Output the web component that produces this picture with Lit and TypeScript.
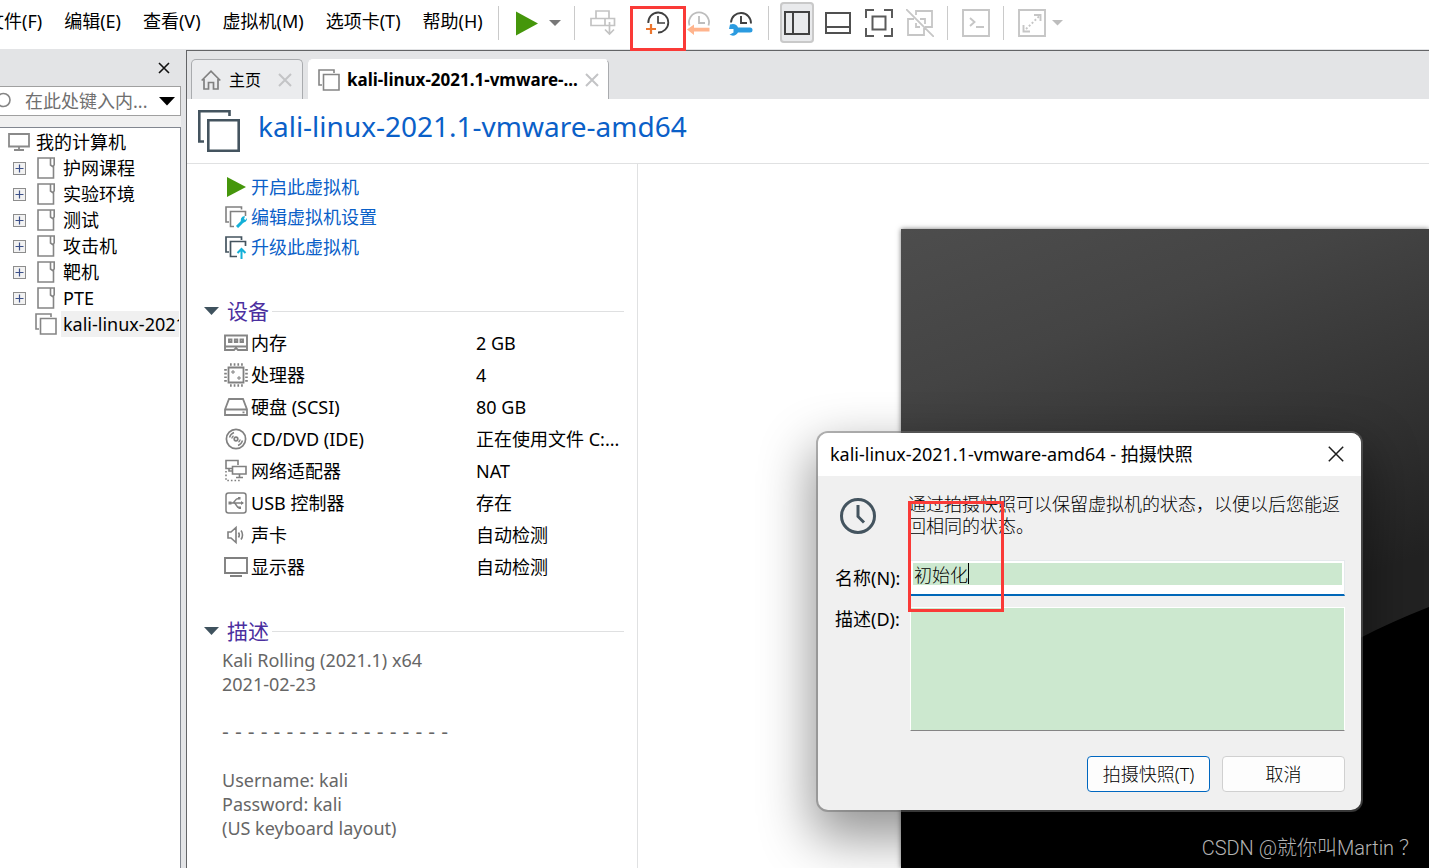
import { LitElement, html, css, nothing, type TemplateResult } from "lit";
import { customElement, property } from "lit/decorators.js";

const icons: Record<string, TemplateResult> = {
  play: html`<svg width="24" height="26" viewBox="0 0 24 26"><path d="M1 1.500v24L23 13.500z" fill="#45960b"/></svg>`,
  caret: html`<svg width="12" height="8" viewBox="0 0 12 8"><path d="M0 1h12L6 7z" fill="#787878"/></svg>`,
  caretOff: html`<svg width="12" height="8" viewBox="0 0 12 8"><path d="M0 1h11L5.500 6.500z" fill="#bdbdbd"/></svg>`,
  sendKeys: html`<svg width="26" height="26" viewBox="0 0 26 26" fill="none" stroke="#c3c3c3" stroke-width="1.700"><path d="M6 8V1h13v7M1 8.500h23.500v7H1zM15 8.500v7M19.500 12v12M15 19.500l4.500 4.500 4.500-4.500"/></svg>`,
  snapTake: html`<svg width="26" height="26" viewBox="0 0 26 26" fill="none"><path d="M4.300 13A10 10 0 1 1 14 22.500" stroke="#404040" stroke-width="1.800"/><path d="M14 6v7h7" stroke="#404040" stroke-width="1.700"/><path d="M7 14v10M2 19h10" stroke="#ec762f" stroke-width="2.200"/></svg>`,
  snapRevert: html`<svg width="26" height="26" viewBox="0 0 26 26" fill="none"><path d="M3.500 15.500a10 10 0 1 1 19 0M13 6v7h6" stroke="#bdbdbd" stroke-width="1.800"/><path d="M1 19.500l7-5v3.200h15.500v3.800H8V25z" fill="#ffb48d"/></svg>`,
  snapManage: html`<svg width="28" height="26" viewBox="0 0 28 26" fill="none"><path d="M4 12.500a10 10 0 1 1 20 1M14 6v7h6" stroke="#404040" stroke-width="1.900"/><path d="M3 14.500c4-1.500 7 0 8 3h12a2.300 2.300 0 0 1 0 5H11c-1.500 3-5 4-8.500 2.300l4-2.300v-3.500H2z" fill="#2b9be0"/></svg>`,
  paneLeft: html`<svg width="26" height="26" viewBox="0 0 26 26" fill="none" stroke="#414141" stroke-width="2"><path d="M1 2h24v22H1zM9 2v22"/></svg>`,
  paneBottom: html`<svg width="26" height="26" viewBox="0 0 26 26" fill="none" stroke="#505050" stroke-width="2"><path d="M1 3h24v20H1zM1 17h24"/></svg>`,
  fit: html`<svg width="28" height="28" viewBox="0 0 28 28" fill="none" stroke="#5a5a5a" stroke-width="2"><path d="M1 9V1h8M19 1h8v8M27 19v8h-8M9 27H1v-8M7.500 7.500h13v13h-13z"/></svg>`,
  noUnity: html`<svg width="28" height="28" viewBox="0 0 28 28" fill="none" stroke="#c6c6c6" stroke-width="1.800"><path d="M10 6V2h16v16h-7M8 10H2v16h16v-7M14 10h5v5M0 0l28 28M10 14v4h4"/></svg>`,
  console: html`<svg width="28" height="28" viewBox="0 0 28 28" fill="none" stroke="#c6c6c6" stroke-width="1.900"><path d="M1 1h26v26H1zM8 9l4.500 4L8 17M14 18h8"/></svg>`,
  stretch: html`<svg width="28" height="28" viewBox="0 0 28 28" fill="none" stroke="#c6c6c6" stroke-width="1.900"><path d="M1 1h26v26H1zM16 6h6.500v6M5.500 16v6.500H12"/><path d="M8 20L21 7.500" stroke-dasharray="2 2"/></svg>`,
  cross: html`<svg width="14" height="14" viewBox="0 0 14 14" stroke="#111" stroke-width="1.600"><path d="M2 2l10 10M12 2L2 12"/></svg>`,
  crossPale: html`<svg width="14" height="14" viewBox="0 0 14 14" stroke="#c3c4c6" stroke-width="2"><path d="M1 1l12 12M13 1L1 13"/></svg>`,
  crossDialog: html`<svg width="16" height="16" viewBox="0 0 16 16" stroke="#1c1c1c" stroke-width="1.500"><path d="M.8.8l14.400 14.400M15.200.8L.8 15.200"/></svg>`,
  search: html`<svg width="12" height="20" viewBox="0 0 12 20" fill="none" stroke="#858585" stroke-width="1.600"><circle cx="3.500" cy="9" r="6.500"/></svg>`,
  dropdown: html`<svg width="16" height="9" viewBox="0 0 16 9"><path d="M0 0h16L8 8.500z" fill="#000"/></svg>`,
  computer: html`<svg width="22" height="20" viewBox="0 0 22 20" fill="none" stroke="#8a8a8a" stroke-width="1.800"><path d="M1 2h20v12.500H1zM11 15v3M6 18h10"/></svg>`,
  plus: html`<svg width="13" height="13" viewBox="0 0 13 13" fill="none"><rect x=".5" y=".5" width="12" height="12" fill="#f2f2f2" stroke="#8d8d8d"/><path d="M6.500 2.500v8M2.500 6.500h8" stroke="#3c5089" stroke-width="1.200"/></svg>`,
  folder: html`<svg width="18" height="22" viewBox="0 0 18 22" fill="none" stroke="#858585" stroke-width="1.600"><path d="M13.500 1H1v20h15.500V9M13.500 1h3.700v7l-1.700 1.500L13.500 8z"/></svg>`,
  vm: html`<svg width="22" height="22" viewBox="0 0 22 22" fill="none" stroke="#858585" stroke-width="1.600"><path d="M4 16H1V1h15v3M5.500 5.500H21V21H5.500z"/></svg>`,
  home: html`<svg width="20" height="20" viewBox="0 0 20 20" fill="none" stroke="#808080" stroke-width="1.700"><path d="M.7 10.500L10 1.200l9.300 9.300M3 9v10h4.500v-6.500h5V19H17V9"/></svg>`,
  vmLarge: html`<svg width="42" height="42" viewBox="0 0 42 42" fill="none" stroke="#44545f" stroke-width="2.600"><path d="M6 31.500H1.300V1.300h30.200V6M10.300 10.300h30.400v30.400H10.300z"/></svg>`,
  actPlay: html`<svg width="22" height="22" viewBox="0 0 22 22"><path d="M2 1v20l19-10z" fill="#45960b"/></svg>`,
  actEdit: html`<svg width="22" height="22" viewBox="0 0 22 22" fill="none"><path d="M4 16H1V1h15.500v2.500M9 20.500H5.500v-15h15V10" stroke="#808080" stroke-width="1.600"/><path d="M12 21l7-7" stroke="#14b0d8" stroke-width="3"/><path d="M16 15.500c-1-3 1.500-6 4-5l-1 2.500 1.500 1L22 12c.5 3-2.500 5-4.500 4.500z" fill="#14b0d8"/></svg>`,
  actUp: html`<svg width="22" height="23" viewBox="0 0 22 23" fill="none"><path d="M4 16H1V1h15.500v3M12 20.500H5.500v-15h15V10" stroke="#44545f" stroke-width="1.700"/><path d="M16.500 23v-9M12.500 17l4-4 4 4" stroke="#14b0d8" stroke-width="2"/></svg>`,
  twisty: html`<svg width="16" height="8" viewBox="0 0 16 8"><path d="M0 0h15L7.500 8z" fill="#3f525e"/></svg>`,
  memory: html`<svg width="24" height="24" viewBox="0 0 24 24" fill="none" stroke="#858585" stroke-width="1.900"><path d="M1 4.500h22V19h-9l-2-2-2 2H1zM1 15.500h22"/><path d="M5 8.500h2.500v2.500H5zM10.800 8.500h2.500v2.500h-2.500zM16.500 8.500H19v2.500h-2.500z"/></svg>`,
  cpu: html`<svg width="24" height="24" viewBox="0 0 24 24" fill="none" stroke="#808080" stroke-width="1.800"><path d="M4.500 4.500h15v15h-15z"/><path d="M6 1.500h13M6 22.500h13" stroke-dasharray="1.700 2" stroke-width="2.600"/><path d="M1.500 6v13M22.500 6v13" stroke-dasharray="1.700 2" stroke-width="2.600"/><path d="M8 8h2v2H8zM14 14h2v2h-2z" stroke-width="1"/></svg>`,
  disk: html`<svg width="24" height="24" viewBox="0 0 24 24" fill="none" stroke="#858585" stroke-width="1.800"><path d="M1 14.500L5 4h14l4 10.500V20H1zM1 14.500h22M18.500 17.300h2"/></svg>`,
  cd: html`<svg width="24" height="24" viewBox="0 0 24 24" fill="none" stroke="#808080" stroke-width="1.700"><circle cx="12" cy="12" r="9.600"/><circle cx="12" cy="12" r="1.800"/><path d="M5.500 10.500c.6-2.500 2-4 4.500-5M18.500 13.500c-.6 2.500-2 4-4.500 5M7.800 11.500c.2-1.200.8-2 1.700-2.700M16.200 12.500c-.2 1.200-.8 2-1.700 2.700" stroke-width="1.400"/></svg>`,
  net: html`<svg width="24" height="24" viewBox="0 0 24 24" fill="none" stroke="#808080" stroke-width="1.600"><path d="M8 9.500H2v-8h12V6M8.500 7.500H22V15H8.500zM15.500 15v3.500M12 18.500h7M5 9.500V12h3"/><path d="M2 12v9.500h14" stroke-dasharray="1.600 2"/></svg>`,
  usb: html`<svg width="24" height="24" viewBox="0 0 24 24" fill="none" stroke="#808080" stroke-width="1.500"><rect x="2" y="2" width="20" height="20" rx="2.500"/><path d="M5 12h14M8.500 12c2.500 0 2-4.500 6-4.500M10 12c2.500 0 2 4.500 5 4.500"/><path d="M4.500 10.500h3v3h-3zM17 10l3 2-3 2zM14 6h2.500v2.500H14zM14.500 15.500H17V18h-2.500z" fill="#808080" stroke="none"/></svg>`,
  sound: html`<svg width="24" height="24" viewBox="0 0 24 24" fill="none" stroke="#808080" stroke-width="1.600"><path d="M4 9v6h3l5 4.500v-15L7 9zM14.500 9.500c1 1.500 1 3.500 0 5M17 7.500c2 2.500 2 6.500 0 9"/></svg>`,
  display: html`<svg width="24" height="24" viewBox="0 0 24 24" fill="none" stroke="#808080" stroke-width="1.900"><path d="M1 3h22v15H1zM6 21h12"/></svg>`,
  clock: html`<svg width="38" height="38" viewBox="0 0 38 38" fill="none" stroke="#44545f" stroke-width="3"><circle cx="19" cy="19" r="16.500"/><path d="M19 8v11.500l6 6"/></svg>`,
};

const MENUS = ["文件(F)", "编辑(E)", "查看(V)", "虚拟机(M)", "选项卡(T)", "帮助(H)"];
const FOLDERS = ["护网课程", "实验环境", "测试", "攻击机", "靶机", "PTE"];
const DEVICES: [string, string, string][] = [
  ["memory", "内存", "2 GB"],
  ["cpu", "处理器", "4"],
  ["disk", "硬盘 (SCSI)", "80 GB"],
  ["cd", "CD/DVD (IDE)", "正在使用文件 C:..."],
  ["net", "网络适配器", "NAT"],
  ["usb", "USB 控制器", "存在"],
  ["sound", "声卡", "自动检测"],
  ["display", "显示器", "自动检测"],
];
const ACTIONS: [string, string][] = [
  ["actPlay", "开启此虚拟机"],
  ["actEdit", "编辑虚拟机设置"],
  ["actUp", "升级此虚拟机"],
];
const NOTES_TOP = "Kali Rolling (2021.1) x64\n2021-02-23";
const NOTES_RULE = "- - - - - - - - - - - - - - - - - -";
const NOTES_LOGIN = "Username: kali\nPassword: kali\n(US keyboard layout)";

const base = css`
  * { box-sizing: border-box; }
  svg { display: block; flex: none; }
  button { font: inherit; color: inherit; background: none; border: 0; padding: 0; margin: 0; }
  ul, h1, h2, p, dl, dd, dt { margin: 0; padding: 0; font: inherit; list-style: none; }
`;

@customElement("top-bar")
class TopBar extends LitElement {
  static styles = [base, css`
    :host { display: block; background: #fff; }
    .bar { display: flex; align-items: center; gap: 10px; padding: 2px 0 6px; }
    .menus { display: flex; gap: 22px; margin-left: -14px; margin-right: 5px; padding-bottom: 3px; }
    .menus button { white-space: nowrap; line-height: 24px; }
    .sep { width: 1px; height: 34px; margin-right: 1px; background: #cacaca; flex: none; }
    .group { display: flex; align-items: center; }
    .power { gap: 2px; }
    .snaps { gap: 8px; margin-left: 10px; }
    .views { gap: 7px; }
    .tool { position: relative; display: grid; place-items: center; width: 34px; height: 41px; border-radius: 4px; }
    .tool.on { background: #e9eaec; box-shadow: inset 0 0 0 2px #c9c9c9; }
    .narrow { width: 18px; }
    .mark { position: absolute; left: -10px; top: 4px; width: 56px; height: 45px; border: 3px solid #fa3a37; z-index: 2; }
  `];

  tool(icon: string, label: string, cls = "", mark = false) {
    return html`<button class="tool ${cls}" aria-label=${label}>${icons[icon]}${mark ? html`<span class="mark"></span>` : nothing}</button>`;
  }

  render() {
    return html`<header class="bar">
      <nav class="menus">${MENUS.map((m) => html`<button>${m}</button>`)}</nav>
      <span class="sep"></span>
      <div class="group power">${this.tool("play", "开启")}${this.tool("caret", "电源选项", "narrow")}</div>
      <span class="sep"></span>
      ${this.tool("sendKeys", "发送按键")}
      <div class="group snaps">
        ${this.tool("snapTake", "拍摄快照", "", true)}${this.tool("snapRevert", "恢复快照")}${this.tool("snapManage", "管理快照")}
      </div>
      <span class="sep"></span>
      <div class="group views">
        ${this.tool("paneLeft", "显示库", "on")}${this.tool("paneBottom", "缩略图栏")}${this.tool("fit", "全屏")}${this.tool("noUnity", "Unity")}
      </div>
      <span class="sep"></span>
      ${this.tool("console", "控制台")}
      <span class="sep"></span>
      <div class="group">${this.tool("stretch", "拉伸")}${this.tool("caretOff", "拉伸选项", "narrow")}</div>
    </header>`;
  }
}

@customElement("library-pane")
class LibraryPane extends LitElement {
  static styles = [base, css`
    :host { display: flex; flex-direction: column; background: #f0f0f0; min-width: 0; }
    .head { display: flex; justify-content: flex-end; align-items: center; height: 37px; padding-right: 10px; background: #e3e4e6; }
    .search { display: flex; align-items: center; height: 30px; padding-right: 5px; background: #fff; border: solid #a0a0a0; border-width: 1px 1px 1px 0; }
    .search input { flex: 1; min-width: 0; margin-left: 13px; padding: 0; border: 0; outline: 0; font: inherit; background: none; }
    .search input::placeholder { color: #6f6f6f; opacity: 1; }
    .tree { flex: 1; margin-top: 11px; padding-top: 1px; background: #fff; border: solid #828790; border-width: 1px 1px 0 0; overflow: hidden; }
    .row { display: flex; align-items: center; height: 26px; white-space: nowrap; }
    .root { padding-left: 8px; gap: 6px; }
    .folder { padding-left: 13px; }
    .folder svg { margin-right: 8px; }
    .folder button svg { margin-right: 11px; }
    .leaf { padding-left: 35px; gap: 4px; }
    .picked { flex: 1; min-width: 0; overflow: hidden; margin-right: 1px; padding-left: 2px; line-height: 26px; background: #f0f0f0; }
  `];

  render() {
    return html`
      <div class="head"><button aria-label="关闭库">${icons.cross}</button></div>
      <div class="search">
        ${icons.search}
        <input type="text" aria-label="搜索" placeholder="在此处键入内..." />
        <button aria-label="搜索选项">${icons.dropdown}</button>
      </div>
      <ul class="tree">
        <li class="row root">${icons.computer}<span>我的计算机</span></li>
        ${FOLDERS.map((f) => html`<li class="row folder"><button aria-label="展开">${icons.plus}</button>${icons.folder}<span>${f}</span></li>`)}
        <li class="row leaf">${icons.vm}<span class="picked">kali-linux-2021.1-vmware-amd64</span></li>
      </ul>`;
  }
}

@customElement("section-head")
class SectionHead extends LitElement {
  @property() label = "";
  static styles = [base, css`
    :host { display: flex; align-items: center; gap: 3px; }
    h2 { display: flex; align-items: center; gap: 7px; font-size: 21px; line-height: 30px; color: #4b2f9f; }
    .rule { flex: 1; height: 1px; background: #dfe0e1; }
  `];
  render() {
    return html`<h2>${icons.twisty}${this.label}</h2><span class="rule"></span>`;
  }
}

@customElement("vm-view")
class VmView extends LitElement {
  static styles = [base, css`
    :host { display: flex; flex-direction: column; min-width: 0; background: #fff; border: solid #636466; border-width: 1px 0 0 1px; }
    .tabs { display: flex; gap: 5px; padding: 8px 4px 0; background: #e3e4e6; }
    .tab { display: flex; align-items: center; height: 40px; border: 1px solid #a9abae; border-bottom: 0; border-radius: 5px 5px 0 0; font-size: 16px; white-space: nowrap; background: #ebecee; }
    .home { width: 112px; padding: 0 10px 0 9px; gap: 8px; }
    .tab .shut { margin-left: auto; }
    .current { width: 301px; padding: 0 10px 0 9px; gap: 7px; background: #fff; border-color: #fff #a9abae #fff #fff; font-size: 17px; font-weight: 700; }
    .title { display: flex; align-items: center; gap: 18px; padding: 11px 11px; border-bottom: 1px solid #e0e1e2; }
    h1 { font-size: 28px; line-height: 32px; padding-bottom: 10px; color: #0a60c8; white-space: nowrap; }
    .content { flex: 1; display: flex; min-height: 0; }
    .summary { flex: none; width: 451px; padding: 8px 13px 0 17px; border-right: 1px solid #e0e1e2; }
    .actions { padding-left: 21px; margin-bottom: 34px; }
    .actions a { display: flex; align-items: center; gap: 4px; height: 30px; color: #0a60c8; text-decoration: none; }
    .devices { padding: 1px 0 33px 20px; }
    .device { display: grid; grid-template-columns: 252px 1fr; align-items: center; height: 32px; white-space: nowrap; }
    .device dt { display: flex; align-items: center; gap: 3px; }
    .notes { display: grid; gap: 24px; padding: 2px 0 0 18px; line-height: 24px; color: #666; white-space: pre-line; }
    .dashes { font-family: "DejaVu Sans", sans-serif; font-size: 19px; white-space: nowrap; }
    .stage { flex: 1; min-width: 0; display: flex; padding: 65px 0 0 263px; overflow: hidden; }
    .screen { flex: 1; min-width: 0; box-shadow: 0 0 5px #777; background: linear-gradient(160deg, #4d4d4d 0, #444 20%, #333 42%, #222 62%); }
    .screen svg { width: 100%; height: 100%; }
  `];

  render() {
    return html`
      <div class="tabs">
        <div class="tab home">${icons.home}<span>主页</span><button class="shut" aria-label="关闭">${icons.crossPale}</button></div>
        <div class="tab current">${icons.vm}<span>kali-linux-2021.1-vmware-...</span><button class="shut" aria-label="关闭">${icons.crossPale}</button></div>
      </div>
      <div class="title">${icons.vmLarge}<h1>kali-linux-2021.1-vmware-amd64</h1></div>
      <div class="content">
        <div class="summary">
          <ul class="actions">${ACTIONS.map(([i, t]) => html`<li><a href="#">${icons[i]}<span>${t}</span></a></li>`)}</ul>
          <section-head label="设备"></section-head>
          <dl class="devices">
            ${DEVICES.map(([i, n, v]) => html`<div class="device"><dt>${icons[i]}<span>${n}</span></dt><dd>${v}</dd></div>`)}
          </dl>
          <section-head label="描述"></section-head>
          <div class="notes"><p>${NOTES_TOP}</p><p class="dashes">${NOTES_RULE}</p><p>${NOTES_LOGIN}</p></div>
        </div>
        <div class="stage">
          <div class="screen">
            <svg viewBox="0 0 528 639" preserveAspectRatio="none"><path d="M0 560C260 500 370 460 461 408Q490 393 528 378V639H0z" fill="#000"/></svg>
          </div>
        </div>
      </div>`;
  }
}

@customElement("snapshot-dialog")
class SnapshotDialog extends LitElement {
  static styles = [base, css`
    :host { display: block; width: 543px; background: #f0f0f0; border-radius: 10px; box-shadow: 0 0 0 2px rgba(110, 110, 110, 0.5), 0 22px 52px 6px rgba(0, 0, 0, 0.42); }
    .head { display: flex; align-items: center; justify-content: space-between; height: 43px; padding: 0 17px 2px 12px; background: #fff; border-radius: 10px 10px 0 0; }
    .body { position: relative; padding: 17px 16px 18px 17px; }
    .intro { display: grid; grid-template-columns: 38px 434px; column-gap: 31px; align-items: center; line-height: 22px; margin-bottom: 23px; padding-left: 4px; }
    .intro svg { margin-top: 2px; }
    .intro p, .buttons { font-weight: 300; }
    .field { display: grid; grid-template-columns: 75px 1fr; align-items: start; }
    .field label { line-height: 24px; }
    .name { margin-bottom: 11px; }
    .name label { padding-top: 6px; }
    .box { position: relative; display: flex; }
    .box input { width: 100%; height: 36px; padding: 2px 2px 9px; border: 1px solid #e5e9ec; border-bottom: 2px solid #0067b8; background: linear-gradient(#cce8cf, #cce8cf) content-box, #fff; font: inherit; font-weight: 300; line-height: 22px; text-indent: 1px; outline: 0; border-radius: 0; }
    .caret { position: absolute; left: 58px; top: 3px; width: 1px; height: 21px; background: #000; }
    textarea { width: 100%; height: 124px; display: block; resize: none; outline: 0; border: 1px solid #fff; border-bottom-color: #858585; border-radius: 0; background: #cce8cf; font: inherit; }
    .buttons { display: flex; justify-content: flex-end; gap: 12px; margin-top: 25px; }
    .buttons button { width: 123px; height: 36px; background: #fdfdfd; border: 1px solid #d0d0d0; border-radius: 4px; }
    .buttons .primary { border-color: #0067c0; }
    .mark { position: absolute; left: 90px; top: 25px; width: 96px; height: 111px; border: 3px solid #fa3a37; pointer-events: none; }
  `];

  render() {
    return html`
      <div class="head"><span>kali-linux-2021.1-vmware-amd64 - 拍摄快照</span><button aria-label="关闭">${icons.crossDialog}</button></div>
      <form class="body" @submit=${(e: Event) => e.preventDefault()}>
        <div class="intro">${icons.clock}<p>通过拍摄快照可以保留虚拟机的状态，以便以后您能返回相同的状态。</p></div>
        <div class="field name">
          <label for="name">名称(N):</label>
          <div class="box"><input id="name" type="text" value="初始化" /><span class="caret"></span></div>
        </div>
        <div class="field">
          <label for="desc">描述(D):</label>
          <textarea id="desc"></textarea>
        </div>
        <div class="buttons"><button class="primary" type="submit">拍摄快照(T)</button><button type="button">取消</button></div>
        <span class="mark"></span>
      </form>`;
  }
}

@customElement("app-root")
class AppRoot extends LitElement {
  static styles = [base, css`
    :host { position: relative; display: flex; flex-direction: column; height: 100vh; overflow: hidden; color: #000; background: #e3e4e6; font: 18px/24px "Noto Sans", "Noto Sans CJK SC", sans-serif; }
    top-bar { position: relative; z-index: 1; }
    .work { flex: 1; display: flex; min-height: 0; }
    library-pane { flex: none; width: 181px; margin-right: 5px; }
    vm-view { flex: 1; margin-top: 1px; }
    snapshot-dialog { position: absolute; left: 818px; top: 433px; }
    .credit { position: absolute; right: 10px; bottom: 8px; font: 20px/24px Roboto, "Noto Sans CJK SC", sans-serif; font-weight: 300; color: #b4b4b4; }
  `];

  render() {
    return html`
      <top-bar></top-bar>
      <div class="work"><library-pane></library-pane><vm-view></vm-view></div>
      <snapshot-dialog></snapshot-dialog>
      <span class="credit">CSDN @就你叫Martin ？</span>`;
  }
}
